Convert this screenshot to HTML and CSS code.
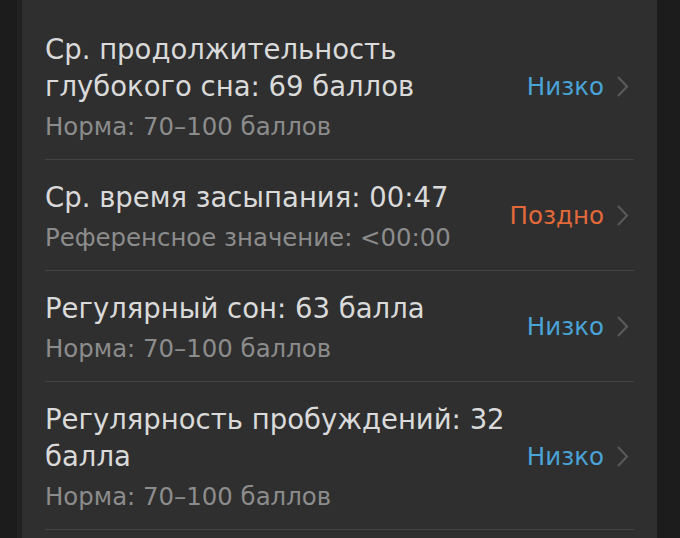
FILE: index.html
```html
<!DOCTYPE html>
<html lang="ru">
<head>
    <meta charset="UTF-8">
    <meta name="viewport" content="width=device-width, initial-scale=1.0">
    <title>Сон</title>
    <link rel="stylesheet" href="styles.css">
</head>
<body>
    <div class="page">
        <div class="card">
            <div class="row">
                <div class="info">
                    <div class="title">Ср. продолжительность<br>глубокого сна: 69 баллов</div>
                    <div class="note">Норма: 70–100 баллов</div>
                </div>
                <div class="status low">Низко</div>
                <svg class="chevron" viewBox="0 0 13 23"><path d="M2 2 L11 11.5 L2 21"/></svg>
            </div>
            <div class="row">
                <div class="info">
                    <div class="title">Ср. время засыпания: 00:47</div>
                    <div class="note">Референсное значение: &lt;00:00</div>
                </div>
                <div class="status late">Поздно</div>
                <svg class="chevron" viewBox="0 0 13 23"><path d="M2 2 L11 11.5 L2 21"/></svg>
            </div>
            <div class="row">
                <div class="info">
                    <div class="title">Регулярный сон: 63 балла</div>
                    <div class="note">Норма: 70–100 баллов</div>
                </div>
                <div class="status low">Низко</div>
                <svg class="chevron" viewBox="0 0 13 23"><path d="M2 2 L11 11.5 L2 21"/></svg>
            </div>
            <div class="row">
                <div class="info">
                    <div class="title">Регулярность пробуждений: 32<br>балла</div>
                    <div class="note">Норма: 70–100 баллов</div>
                </div>
                <div class="status low">Низко</div>
                <svg class="chevron" viewBox="0 0 13 23"><path d="M2 2 L11 11.5 L2 21"/></svg>
            </div>
        </div>
    </div>
</body>
</html>
```

FILE: styles.css
```css
body {
    margin: 0;
    background: #1c1c1c;
    font-family: "DejaVu Sans", "Noto Sans", sans-serif;
    height: 538px;
    overflow: hidden;
}

.page {
    padding-left: 17px;
    background: #1c1c1c;
}

.card {
    border-left: 5px solid #222;
    width: 640px;
    background: #2f2f2f;
    padding: 12px 23px 0;
    box-sizing: border-box;
    min-height: 538px;
}

.row {
    display: flex;
    align-items: center;
    padding: 19px 0 18px;
    border-bottom: 1px solid #434343;
}

.info {
    flex: 1;
}

.title {
    font-size: 27.5px;
    line-height: 37px;
    color: #dadada;
}

.note {
    margin-top: 8px;
    font-size: 24.4px;
    line-height: 28px;
    color: #8c8c8c;
}

.status {
    font-size: 24.5px;
    margin-right: 12px;
}

.status.low {
    color: #4aa3d6;
}

.status.late {
    color: #e2693a;
}

.chevron {
    width: 13px;
    height: 23px;
    margin-right: 5px;
    fill: none;
    stroke: #595959;
    stroke-width: 2.2;
}
```
